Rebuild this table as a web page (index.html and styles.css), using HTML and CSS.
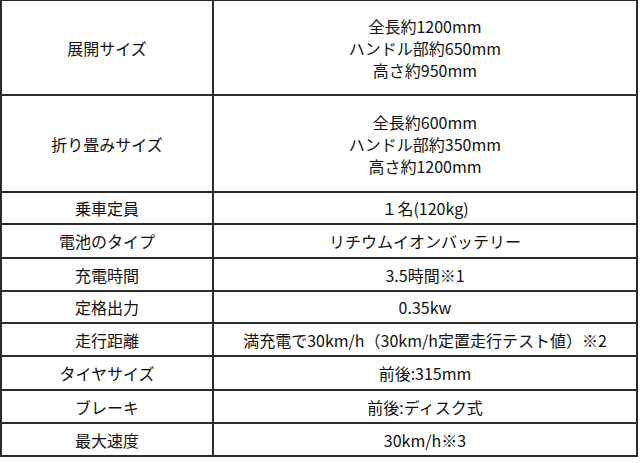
FILE: index.html
```html
<!DOCTYPE html>
<html lang="ja">
<head>
<meta charset="utf-8">
<link rel="stylesheet" href="styles.css">
</head>
<body>
<div class="spec">
  <div class="cell">展開サイズ</div>
  <div class="cell">全長約1200mm<br>ハンドル部約650mm<br>高さ約950mm</div>
  <div class="cell">折り畳みサイズ</div>
  <div class="cell">全長約600mm<br>ハンドル部約350mm<br>高さ約1200mm</div>
  <div class="cell">乗車定員</div>
  <div class="cell">１名(120kg)</div>
  <div class="cell">電池のタイプ</div>
  <div class="cell">リチウムイオンバッテリー</div>
  <div class="cell">充電時間</div>
  <div class="cell">3.5時間※1</div>
  <div class="cell">定格出力</div>
  <div class="cell">0.35kw</div>
  <div class="cell">走行距離</div>
  <div class="cell">満充電で30km/h（30km/h定置走行テスト値）※2</div>
  <div class="cell">タイヤサイズ</div>
  <div class="cell">前後:315mm</div>
  <div class="cell">ブレーキ</div>
  <div class="cell">前後:ディスク式</div>
  <div class="cell">最大速度</div>
  <div class="cell">30km/h※3</div>
</div>
</body>
</html>
```
FILE: styles.css
```css
html, body {
  margin: 0;
  padding: 0;
  background: #ffffff;
}
.spec {
  display: grid;
  width: 638px;
  box-sizing: border-box;
  grid-template-columns: 210px 422px;
  grid-template-rows: 93px 95px 30px 32px 31px 30px 31px 32px 31px 31px;
  gap: 2px;
  padding: 1px 2px 2px 2px;
  background: #2b2b2b;
  font-family: "Noto Sans CJK JP", "Noto Sans", sans-serif;
  font-size: 16px;
  line-height: 22px;
  color: #111;
}
.cell {
  background: #ffffff;
  display: flex;
  align-items: center;
  justify-content: center;
  text-align: center;
  white-space: nowrap;
}
```
